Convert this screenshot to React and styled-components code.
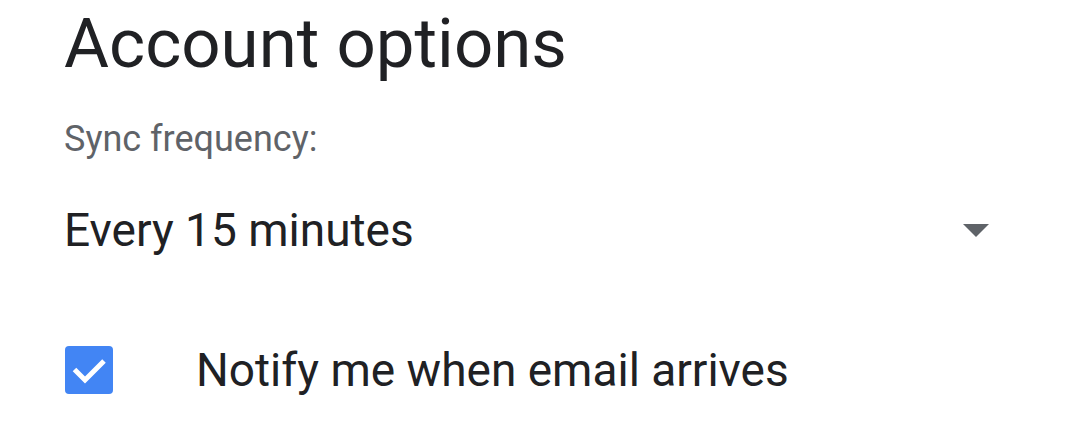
import styled, { createGlobalStyle } from "styled-components";

const GlobalStyle = createGlobalStyle`
  body {
    margin: 0;
    background: #ffffff;
    font-family: Roboto, "Noto Sans", sans-serif;
  }
`;

const Container = styled.div`
  width: 1079px;
  height: 430px;
  box-sizing: border-box;
  padding: 4px 64px 0 64px;
  overflow: hidden;
`;

const Title = styled.h1`
  margin: 0;
  font-size: 69px;
  font-weight: 400;
  line-height: 80px;
  color: #202124;
`;

const Label = styled.div`
  margin-top: 35px;
  font-size: 36px;
  line-height: 40px;
  color: #5f6368;
`;

const Select = styled.div`
  display: flex;
  align-items: center;
  justify-content: space-between;
  height: 80px;
  margin-top: 31px;
  padding-right: 26px;
`;

const SelectValue = styled.span`
  font-size: 46px;
  color: #202124;
`;

const Arrow = styled.span`
  width: 0;
  height: 0;
  border-left: 13px solid transparent;
  border-right: 13px solid transparent;
  border-top: 13px solid #5f6368;
`;

const CheckRow = styled.label`
  display: flex;
  align-items: center;
  gap: 83px;
  margin-top: 76px;
  padding-left: 1px;
`;

const Box = styled.span`
  width: 48px;
  height: 48px;
  border-radius: 4px;
  background: #4285f4;
  display: flex;
`;

const CheckText = styled.span`
  font-size: 46px;
  line-height: 48px;
  color: #202124;
`;

const App = () => {
  return (
    <>
      <GlobalStyle />
      <Container>
        <Title>Account options</Title>
        <Label>Sync frequency:</Label>
        <Select>
          <SelectValue>Every 15 minutes</SelectValue>
          <Arrow />
        </Select>
        <CheckRow>
          <Box>
            <svg width="48" height="48" viewBox="0 0 48 48">
              <path d="M9.5 23.5l10.5 10.5L39 15" fill="none" stroke="#fff" strokeWidth="5" />
            </svg>
          </Box>
          <CheckText>Notify me when email arrives</CheckText>
        </CheckRow>
      </Container>
    </>
  );
};

export default App;
